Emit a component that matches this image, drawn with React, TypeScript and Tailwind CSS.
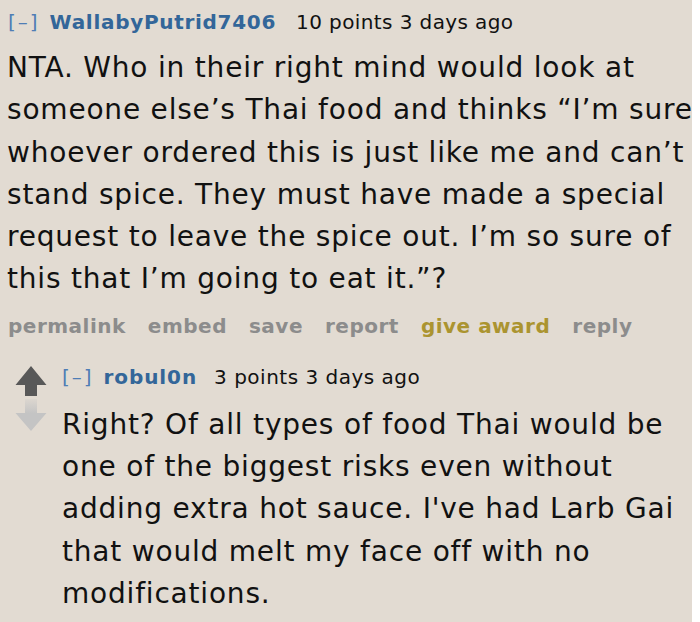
const font = { fontFamily: '"DejaVu Sans", Verdana, sans-serif' };

function UpArrow() {
  return (
    <svg width="32" height="30" viewBox="0 0 32 30" className="block">
      <path d="M16 0 L31.5 19 L22 19 L22 30 L10 30 L10 19 L0.5 19 Z" fill="#585858" />
    </svg>
  );
}

function DownArrow() {
  return (
    <svg width="32" height="32" viewBox="0 0 32 32" className="block">
      <defs>
        <linearGradient id="fade" x1="0" y1="0" x2="0" y2="1">
          <stop offset="0" stopColor="#c4c4c4" stopOpacity="0.2" />
          <stop offset="0.45" stopColor="#c4c4c4" stopOpacity="1" />
        </linearGradient>
      </defs>
      <path d="M16 32 L31.5 14 L22 14 L22 0 L10 0 L10 14 L0.5 14 Z" fill="url(#fade)" />
    </svg>
  );
}

export default function App() {
  return (
    <div className="flex h-[622px] w-[700px] overflow-hidden bg-white" style={font}>
      <div className="w-[692px] shrink-0 whitespace-nowrap bg-[#e2dbd2] text-[#111]">
        <div className="flex items-baseline gap-[20px] pl-[8px] pt-[8px] text-[20px] leading-[28px] tracking-[0.4px]">
          <span className="flex items-baseline gap-[10px]">
            <span className="tracking-[2px] text-[#4f7db5]">[–]</span>
            <span className="font-bold tracking-[0.7px] text-[#336699]">WallabyPutrid7406</span>
          </span>
          <span>10 points 3 days ago</span>
        </div>
        <p className="mt-[11px] pl-[7px] text-[28px] leading-[42.3px] tracking-[0.8px]">
          NTA. Who in their right mind would look at
          <br />
          someone else’s Thai food and thinks “I’m sure
          <br />
          whoever ordered this is just like me and can’t
          <br />
          stand spice. They must have made a special
          <br />
          request to leave the spice out. I’m so sure of
          <br />
          this that I’m going to eat it.”?
        </p>
        <div className="mt-[11px] flex gap-[22px] pl-[8px] text-[20px] font-bold leading-[28px] tracking-[0.5px] text-[#8c8c8c]">
          <span>permalink</span>
          <span>embed</span>
          <span>save</span>
          <span>report</span>
          <span className="text-[#ab9430]">give award</span>
          <span>reply</span>
        </div>
        <div className="mt-[24px] flex">
          <div className="flex w-[62px] flex-col gap-[3px] pl-[15px] pt-[2px]">
            <UpArrow />
            <DownArrow />
          </div>
          <div>
            <div className="flex items-baseline gap-[17px] text-[20px] leading-[26px] tracking-[0.5px]">
              <span className="flex items-baseline gap-[10px]">
                <span className="tracking-[2px] text-[#4f7db5]">[–]</span>
                <span className="font-bold tracking-[0.9px] text-[#336699]">robul0n</span>
              </span>
              <span>3 points 3 days ago</span>
            </div>
            <p className="mt-[14px] text-[28px] leading-[42.3px] tracking-[0.8px]">
              Right? Of all types of food Thai would be
              <br />
              one of the biggest risks even without
              <br />
              adding extra hot sauce. I've had Larb Gai
              <br />
              that would melt my face off with no
              <br />
              modifications.
            </p>
          </div>
        </div>
      </div>
    </div>
  );
}
